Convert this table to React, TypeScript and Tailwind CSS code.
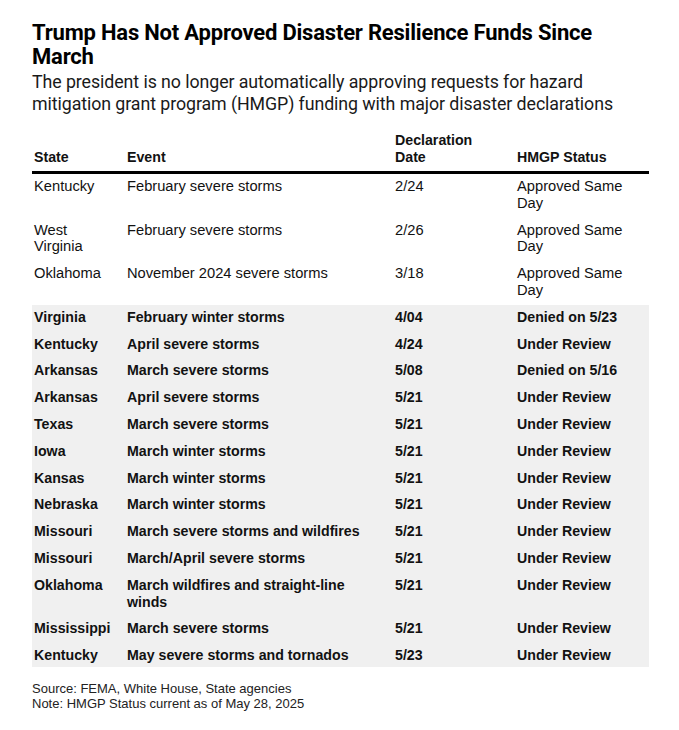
import React from "react";

type Row = { state: string; event: string; date: string; status: string; bold?: boolean };

const rows: Row[] = [
  { state: "Kentucky", event: "February severe storms", date: "2/24", status: "Approved Same Day" },
  { state: "West Virginia", event: "February severe storms", date: "2/26", status: "Approved Same Day" },
  { state: "Oklahoma", event: "November 2024 severe storms", date: "3/18", status: "Approved Same Day" },
  { state: "Virginia", event: "February winter storms", date: "4/04", status: "Denied on 5/23", bold: true },
  { state: "Kentucky", event: "April severe storms", date: "4/24", status: "Under Review", bold: true },
  { state: "Arkansas", event: "March severe storms", date: "5/08", status: "Denied on 5/16", bold: true },
  { state: "Arkansas", event: "April severe storms", date: "5/21", status: "Under Review", bold: true },
  { state: "Texas", event: "March severe storms", date: "5/21", status: "Under Review", bold: true },
  { state: "Iowa", event: "March winter storms", date: "5/21", status: "Under Review", bold: true },
  { state: "Kansas", event: "March winter storms", date: "5/21", status: "Under Review", bold: true },
  { state: "Nebraska", event: "March winter storms", date: "5/21", status: "Under Review", bold: true },
  { state: "Missouri", event: "March severe storms and wildfires", date: "5/21", status: "Under Review", bold: true },
  { state: "Missouri", event: "March/April severe storms", date: "5/21", status: "Under Review", bold: true },
  { state: "Oklahoma", event: "March wildfires and straight-line winds", date: "5/21", status: "Under Review", bold: true },
  { state: "Mississippi", event: "March severe storms", date: "5/21", status: "Under Review", bold: true },
  { state: "Kentucky", event: "May severe storms and tornados", date: "5/23", status: "Under Review", bold: true },
];

export default function App() {
  return (
    <div className="w-[679px] h-[730px] bg-white text-[#121212] pl-8 pr-[30px] pt-[21px] font-['Roboto',sans-serif]">
      <h1 className="text-[22px] leading-[24px] font-bold tracking-[-0.2px] text-black">
        Trump Has Not Approved Disaster Resilience Funds Since March
      </h1>
      <p className="mt-[2px] text-[17.8px] leading-[22px] tracking-[-0.08px] text-[#1a1a1a]">
        The president is no longer automatically approving requests for hazard mitigation grant program (HMGP) funding with major disaster declarations
      </p>
      <table className="mt-[17px] w-[617px] border-collapse leading-[16.8px] font-['Liberation_Sans',sans-serif] table-fixed">
        <colgroup>
          <col className="w-[93px]" />
          <col className="w-[268px]" />
          <col className="w-[122px]" />
          <col className="w-[134px]" />
        </colgroup>
        <thead>
          <tr className="border-b-[3px] border-black text-[14.2px] leading-[17px]">
            <th className="text-left align-bottom font-bold pl-[2px] pb-[5px]">State</th>
            <th className="text-left align-bottom font-bold pl-[2px] pb-[5px]">Event</th>
            <th className="text-left align-bottom font-bold pl-[2px] pb-[5px]">Declaration<br />Date</th>
            <th className="text-left align-bottom font-bold pl-[2px] pb-[5px]">HMGP Status</th>
          </tr>
        </thead>
        <tbody>
          {rows.map((r, i) => {
            const pb = i === rows.length - 1 ? "pb-[3px]" : "pb-[6px]";
            return (
              <tr key={i} className={r.bold ? "bg-[#f0f0f0] font-bold text-[14.2px]" : "text-[14.7px]"}>
                <td className={`align-top pl-[2px] pr-2 pt-[4px] ${pb}`}>{r.state}</td>
                <td className={`align-top pl-[2px] pr-[12px] pt-[4px] ${pb}`}>{r.event}</td>
                <td className={`align-top pl-[2px] pt-[4px] ${pb}`}>{r.date}</td>
                <td className={`align-top pl-[2px] pr-[20px] pt-[4px] ${pb}`}>{r.status}</td>
              </tr>
            );
          })}
        </tbody>
      </table>
      <div className="mt-[14px] text-[13px] leading-[15px] text-[#222] font-['Liberation_Sans',sans-serif]">
        <div>Source: FEMA, White House, State agencies</div>
        <div>Note: HMGP Status current as of May 28, 2025</div>
      </div>
    </div>
  );
}
